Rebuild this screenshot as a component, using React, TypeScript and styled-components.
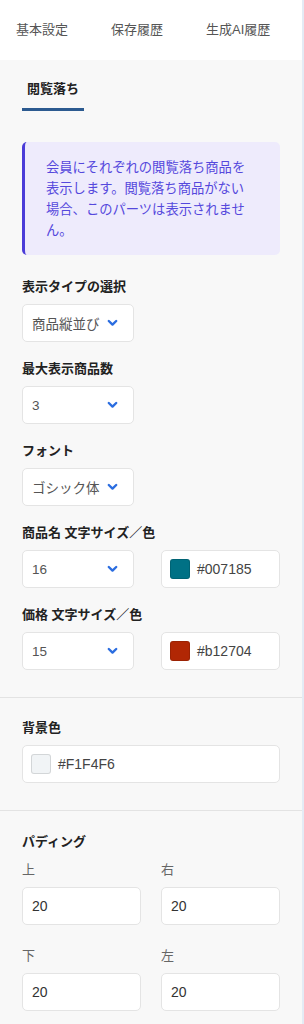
import React from "react";
import styled, { createGlobalStyle } from "styled-components";

const GlobalStyle = createGlobalStyle`
  html, body { margin: 0; padding: 0; background: #f8f8f8; }
  body {
    font-family: "Liberation Sans", "Noto Sans CJK JP", sans-serif;
    -webkit-font-smoothing: antialiased;
  }
  * { box-sizing: border-box; }
`;

const Shell = styled.div`
  display: flex;
  min-height: 100vh;
`;

const Panel = styled.div`
  width: 302px;
  background: #f8f8f8;
  display: flex;
  flex-direction: column;
`;

const Edge = styled.div`
  width: 2px;
  background: #e4ebf5;
`;

const TabBar = styled.nav`
  height: 60px;
  background: #ffffff;
  display: flex;
  align-items: center;
  gap: 43px;
  padding-left: 16px;
`;

const Tab = styled.span`
  font-size: 13px;
  line-height: 18px;
  color: #555;
  white-space: nowrap;
`;

const Section = styled.section<{ $top: number; $bottom: number; $divider?: boolean }>`
  display: flex;
  flex-direction: column;
  padding: ${(p) => p.$top}px 22px ${(p) => p.$bottom}px 22px;
  border-top: ${(p) => (p.$divider ? "1px solid #e3e3e3" : "none")};
`;

const SubTab = styled.div`
  align-self: flex-start;
  padding: 0 5px 10px;
  border-bottom: 3px solid #2c5a90;
  font-size: 13px;
  line-height: 18px;
  font-weight: 700;
  color: #222;
`;

const InfoBox = styled.div`
  margin-top: 31px;
  padding: 15px 24px 14px 21px;
  background: #eeebfc;
  border-left: 3px solid #4b3cd8;
  border-radius: 5px;
  font-size: 13.3px;
  line-height: 21px;
  color: #5548dc;
`;

const Fields = styled.div<{ $top?: number }>`
  display: flex;
  flex-direction: column;
  gap: 18px;
  margin-top: ${(p) => p.$top ?? 0}px;
`;

const Field = styled.div`
  display: flex;
  flex-direction: column;
  gap: 8px;
`;

const Label = styled.div`
  font-size: 13px;
  line-height: 18px;
  font-weight: 700;
  color: #222;
`;

const SubLabel = styled.div`
  font-size: 13px;
  line-height: 18px;
  color: #666;
`;

const Pair = styled.div`
  display: grid;
  grid-template-columns: 1fr 1fr;
  column-gap: 20px;
`;

const SelectBox = styled.div`
  width: 112px;
  height: 38px;
  background: #fff;
  border: 1px solid #e4e4e4;
  border-radius: 5px;
  padding: 0 15px 0 9px;
  display: flex;
  align-items: center;
  justify-content: space-between;
  font-size: 13.5px;
  color: #555;
  white-space: nowrap;
`;

const ColorBox = styled.div`
  height: 38px;
  background: #fff;
  border: 1px solid #e4e4e4;
  border-radius: 5px;
  padding: 0 8px;
  display: flex;
  align-items: center;
  gap: 7px;
  font-size: 14px;
  color: #444;
`;

const Swatch = styled.span<{ $color: string }>`
  width: 20px;
  height: 20px;
  border-radius: 3px;
  background: ${(p) => p.$color};
  box-shadow: inset 0 0 0 1px rgba(0, 0, 0, 0.12);
  flex: none;
`;

const Grid = styled.div`
  display: grid;
  grid-template-columns: 1fr 1fr;
  column-gap: 20px;
  row-gap: 22px;
  margin-top: 10px;
`;

const TextInput = styled.input`
  width: 100%;
  height: 38px;
  background: #fff;
  border: 1px solid #e4e4e4;
  border-radius: 5px;
  padding: 0 9px;
  font: inherit;
  font-size: 14px;
  color: #333;
  outline: none;
`;

const Chevron = () => (
  <svg width="11" height="8" viewBox="0 0 11 8" aria-hidden="true">
    <path
      d="M1.8 2 L5.5 5.6 L9.2 2"
      fill="none"
      stroke="#2b6de0"
      strokeWidth="2.4"
      strokeLinecap="round"
      strokeLinejoin="round"
    />
  </svg>
);

const Select = ({ value }: { value: string }) => (
  <SelectBox>
    <span>{value}</span>
    <Chevron />
  </SelectBox>
);

const ColorField = ({ color }: { color: string }) => (
  <ColorBox>
    <Swatch $color={color} />
    <span>{color}</span>
  </ColorBox>
);

const paddings = [
  { label: "上", value: "20" },
  { label: "右", value: "20" },
  { label: "下", value: "20" },
  { label: "左", value: "20" },
];

export default function App() {
  return (
    <>
      <GlobalStyle />
      <Shell>
        <Panel>
          <TabBar>
            <Tab>基本設定</Tab>
            <Tab>保存履歴</Tab>
            <Tab>生成AI履歴</Tab>
          </TabBar>

          <Section $top={20} $bottom={27}>
            <SubTab>閲覧落ち</SubTab>
            <InfoBox>
              会員にそれぞれの閲覧落ち商品を表示します。閲覧落ち商品がない場合、このパーツは表示されません。
            </InfoBox>
            <Fields $top={23}>
              <Field>
                <Label>表示タイプの選択</Label>
                <Select value="商品縦並び" />
              </Field>
              <Field>
                <Label>最大表示商品数</Label>
                <Select value="3" />
              </Field>
              <Field>
                <Label>フォント</Label>
                <Select value="ゴシック体" />
              </Field>
              <Field>
                <Label>商品名 文字サイズ／色</Label>
                <Pair>
                  <Select value="16" />
                  <ColorField color="#007185" />
                </Pair>
              </Field>
              <Field>
                <Label>価格 文字サイズ／色</Label>
                <Pair>
                  <Select value="15" />
                  <ColorField color="#b12704" />
                </Pair>
              </Field>
            </Fields>
          </Section>

          <Section $top={21} $bottom={27} $divider>
            <Field>
              <Label>背景色</Label>
              <ColorField color="#F1F4F6" />
            </Field>
          </Section>

          <Section $top={22} $bottom={24} $divider>
            <Label>パディング</Label>
            <Grid>
              {paddings.map((p) => (
                <Field key={p.label}>
                  <SubLabel>{p.label}</SubLabel>
                  <TextInput readOnly value={p.value} />
                </Field>
              ))}
            </Grid>
          </Section>
        </Panel>
        <Edge />
      </Shell>
    </>
  );
}
